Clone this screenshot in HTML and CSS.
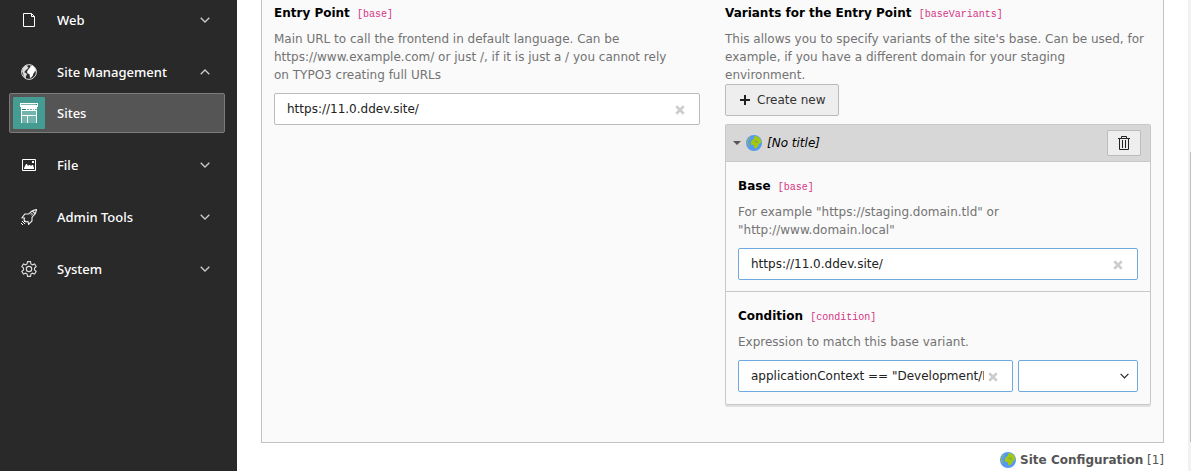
FILE: index.html
```html
<!DOCTYPE html>
<html lang="en">
<head>
<meta charset="utf-8">
<title>Site Configuration</title>
<link rel="stylesheet" href="styles.css">
</head>
<body>
<svg class="defs" aria-hidden="true">
  <symbol id="chevron" viewBox="0 0 10 6"><path d="M.7.7 5 5 9.300.7" fill="none" stroke="currentColor" stroke-width="1.300"/></symbol>
  <symbol id="clear" viewBox="0 0 8 8"><path d="M1 1l6 6M7 1L1 7" fill="none" stroke="currentColor" stroke-width="2"/></symbol>
  <symbol id="earth" viewBox="0 0 16 16">
    <circle cx="8" cy="8" r="8" fill="#5599f0"/>
    <path d="M7 4.500 8.500 3.300 7.500 2 9.500 1l3 1 2 2.300.7 3-1 1.200-1.400.3-.5 2.200-2 2L9 13.500 8 12.500V10H5.500L4.600 8.300 5.200 6z" fill="#a4c90c"/>
    <path d="M7.500 6l3.500-.4 1 1.400-1.300 1.300L9.500 7z" fill="#7fa84e"/>
    <path d="M1.200 5.500 3 2.700l1.500-1L4 3.500 2.500 5.200l-.6 1.900L2.700 9l.6 2.300-.4.700L1.700 10 1 8z" fill="#8aba5a"/>
  </symbol>
</svg>
<div class="app">
  <nav class="menu" aria-label="Modules">
    <button class="menu-item" type="button">
      <svg class="menu-icon" viewBox="0 0 16 16"><path d="M2.500 1.500h8l3 3v10h-11zM10.500 1.500v3h3" fill="none" stroke="#fff"/></svg>
      <span>Web</span><svg class="chevron"><use href="#chevron"/></svg>
    </button>
    <div class="menu-group">
      <button class="menu-item" type="button" aria-expanded="true">
        <svg class="menu-icon" viewBox="0 0 16 16"><circle cx="8" cy="8" r="7.400" fill="#292929" stroke="#ddd"/><path d="M2 4 4 2l3-1-1 1.500 1.500.5L6.500 5 4.800 6 4 7.500 2.800 8 5 9l1 1.500L5 12l-.3 2.500L2.500 12 2 9 1 7.500z" fill="#ddd"/><path d="M8 4.500 9.500 3 9 1.500l3 .5 2.300 2.500.9 3L14 7l-.7 1.500-1 1.200-.5 2-1.800 2H9l-.5-3.500-2-.7L6 7.500z" fill="#fff"/></svg>
        <span>Site Management</span><svg class="chevron up"><use href="#chevron"/></svg>
      </button>
      <a class="menu-item active" href="#sites">
        <svg class="module-icon" viewBox="0 0 32 32"><rect width="32" height="32" rx="1" fill="#449c93"/><path d="M7 6h18v4h-1v16H8V10H7z" fill="#fff"/><path d="M8 7h15v1H8z" fill="#7ab8b1"/><path d="M23 7h1v1h-1zM9 12h4v1H9z" fill="#28776e"/><path d="M14 12h2v1h-2zM17 12h2v1h-2zM20 12h1v1h-1zM22 12h2v1h-2zM9 14h14v4H9zM9 19h5v7H9zM15 19h8v7h-8z" fill="#72b4ad"/></svg>
        <span>Sites</span>
      </a>
    </div>
    <button class="menu-item" type="button">
      <svg class="menu-icon" viewBox="0 0 16 16"><path d="M1.500 2.500h13v11h-13z" fill="none" stroke="#fff"/><path d="M3 12v-1l2-4h1l1 2 1-1h1l1 1 1-1h1l1 3v1zM11 4h2v2h-2z" fill="#fff"/></svg>
      <span>File</span><svg class="chevron"><use href="#chevron"/></svg>
    </button>
    <button class="menu-item" type="button">
      <svg class="menu-icon" viewBox="0 0 16 16"><path d="M15.500.6c-3 .3-5.200 1.300-7 3.800L7.500 5H3.800L1 8.800l2.500.2-.5 2L5 13l2-.5.6 2.900L11 12V8.500l.8-1.100c2.400-1.900 3.500-3.900 3.700-6.800zM11.500 2l2.400 2.500" fill="none" stroke="#eee" stroke-width="1.100"/><circle cx="10.800" cy="5.300" r=".9" fill="none" stroke="#ddd" stroke-width=".7"/><path d="M1 12h1v1H1zM2 13h1v1H2zM0 14h1v1H0zM1 15h1v1H1zM3 12h1v1H3zM3 14h1v1H3z" fill="#fff"/></svg>
      <span>Admin Tools</span><svg class="chevron"><use href="#chevron"/></svg>
    </button>
    <button class="menu-item" type="button">
      <svg class="menu-icon" viewBox="0 0 16 16"><path d="M6.500.6h3l.4 2.300 1.600.9 2.100-.9 1.600 2.700L13.500 7v2l1.700 1.400-1.600 2.700-2.100-.9-1.600.9-.4 2.300h-3l-.4-2.300-1.600-.9-2.100.9L.8 10.400 2.500 9V7L.8 5.600l1.600-2.700 2.100.9 1.600-.9z" fill="none" stroke="#ddd" stroke-width="1.100"/><circle cx="8" cy="8" r="2.700" fill="none" stroke="#ddd" stroke-width="1.200"/></svg>
      <span>System</span><svg class="chevron"><use href="#chevron"/></svg>
    </button>
  </nav>

  <main class="content">
    <form class="panel">
      <section class="field">
        <label class="title" for="entry">Entry Point <code>[base]</code></label>
        <p>Main URL to call the frontend in default language. Can be https://www.example.com/ or just /, if it is just a / you cannot rely <br>on TYPO3 creating full URLs</p>
        <div class="input-box">
          <input id="entry" type="text" value="https://11.0.ddev.site/">
          <button type="button" class="clear" aria-label="Clear"><svg><use href="#clear"/></svg></button>
        </div>
      </section>
      <section class="field">
        <h2 class="title">Variants for the Entry Point <code>[baseVariants]</code></h2>
        <p class="tight">This allows you to specify variants of the site's base. Can be used, for example, if you have a different domain for your staging <br>environment.</p>
        <button class="btn" type="button"><svg viewBox="0 0 10 10"><path d="M5 0v10M0 5h10" stroke="#222" stroke-width="2"/></svg>Create new</button>
        <div class="record">
          <header class="record-head">
            <button class="toggle" type="button" aria-expanded="true">
              <svg class="caret" viewBox="0 0 8 4"><path d="M0 0h8L4 4z" fill="#555"/></svg>
              <svg class="earth"><use href="#earth"/></svg>
              <em>[No title]</em>
            </button>
            <button class="btn trash" type="button" aria-label="Delete"><svg viewBox="0 0 12 14"><path d="M0 2.500h12M3.500 2V.5h5V2M1.500 3v10.500h9V3M4.500 4v8M7.500 4v8" fill="none" stroke="#222"/></svg></button>
          </header>
          <section class="record-field">
            <label class="title" for="base">Base <code>[base]</code></label>
            <p>For example "https://staging.domain.tld" or "http://www.domain.local"</p>
            <div class="input-box changed">
              <input id="base" type="text" value="https://11.0.ddev.site/">
              <button type="button" class="clear" aria-label="Clear"><svg><use href="#clear"/></svg></button>
            </div>
          </section>
          <section class="record-field">
            <label class="title" for="condition">Condition <code>[condition]</code></label>
            <p>Expression to match this base variant.</p>
            <div class="combo">
              <div class="input-box changed">
                <input id="condition" type="text" value='applicationContext == "Development/Local"'>
                <button type="button" class="clear" aria-label="Clear"><svg><use href="#clear"/></svg></button>
              </div>
              <div class="select-box changed">
                <select aria-label="Condition presets"><option></option></select>
                <svg class="chevron"><use href="#chevron"/></svg>
              </div>
            </div>
          </section>
        </div>
      </section>
    </form>
    <footer class="foot"><svg class="earth"><use href="#earth"/></svg><span><strong>Site Configuration</strong> [1]</span></footer>
  </main>
  <div class="scroll" aria-hidden="true"><div class="thumb"></div></div>
</div>
</body>
</html>
```
FILE: styles.css
```css
* { box-sizing: border-box; }
body {
  margin: 0;
  font: 12px/18px Verdana, "DejaVu Sans", sans-serif;
  color: #222;
  background: #fff;
}
button, input, select { font: inherit; color: inherit; }
svg { display: block; flex: none; }
.defs { position: absolute; width: 0; height: 0; }
.app { display: flex; min-height: 100vh; }

.menu {
  flex: none;
  width: 237px;
  padding: 0 12px 0 9px;
  display: flex;
  flex-direction: column;
  gap: 12px;
  background: #292929;
}
.menu-group { display: grid; gap: 1px; }
.menu-item {
  display: flex;
  align-items: center;
  width: 100%;
  height: 40px;
  padding: 0 15px 0 12px;
  gap: 20px;
  border: 0;
  background: none;
  color: #fff;
  font: 500 13px/18px "Noto Sans", sans-serif;
  text-align: left;
  text-decoration: none;
}
.menu-item span { flex: 1; }
.menu-item.active {
  padding: 0 3px;
  gap: 12px;
  border: 1px solid #7c7c7c;
  border-radius: 2px;
  background: #555;
}
.menu-icon { width: 16px; height: 16px; }
.module-icon { width: 32px; height: 32px; }
.chevron { width: 10px; height: 6px; color: #ccc; }
.chevron.up { transform: rotate(180deg); }

.content { flex: 1; min-width: 0; padding: 0 24px; }
.panel {
  display: grid;
  grid-template-columns: 1fr 1fr;
  gap: 25px;
  padding: 4px 12px 37px;
  border: 1px solid #c3c3c3;
  border-top: 0;
  background: #fafafa;
}
.field { min-width: 0; }
.title { display: block; margin: 0; font-size: 12px; font-weight: 700; line-height: 18px; color: #000; }
.title code { margin-left: 3px; font: 10px/14px "Liberation Mono", monospace; color: #d63384; }
p { margin: 8px 0 9px; color: #737373; }
p.tight { margin-bottom: 0; }

.input-box, .select-box {
  display: flex;
  align-items: center;
  height: 32px;
  padding: 0 14px 0 12px;
  border: 1px solid #bbb;
  border-radius: 2px;
  background: #fff;
}
.changed { border-color: #6daae0; }
.input-box input { flex: 1; min-width: 0; padding: 0; border: 0; background: none; outline: 0; }
.clear { flex: none; padding: 2px 0 0 4px; border: 0; background: none; color: #ccc; }
.clear svg { width: 10px; height: 10px; }
.combo { display: flex; gap: 5px; }
.combo .input-box { flex: 1; min-width: 0; }
.select-box { width: 120px; padding: 0 8px 0 0; }
.select-box select { flex: 1; min-width: 0; height: 30px; border: 0; background: none; appearance: none; outline: 0; }
.select-box .chevron { width: 9px; color: #222; }

.btn {
  display: flex;
  align-items: center;
  justify-content: center;
  gap: 7px;
  height: 32px;
  padding: 0 12px 0 14px;
  border: 1px solid #bbb;
  border-radius: 2px;
  background: #eee;
  color: #333;
}
.btn svg { width: 10px; height: 10px; }
.btn.trash { width: 34px; height: 26px; padding: 0; }
.btn.trash svg { width: 12px; height: 14px; }

.record {
  margin-top: 8px;
  border: 1px solid #c8c8c8;
  border-radius: 2px;
  box-shadow: 0 2px 0 #e0e0e0;
}
.record-head {
  display: flex;
  align-items: center;
  justify-content: space-between;
  height: 36px;
  padding: 0 9px 0 7px;
  background: #d7d7d7;
}
.toggle { display: flex; align-items: center; gap: 5px; padding: 0; border: 0; background: none; color: #000; }
.caret { width: 8px; height: 4px; }
.earth { width: 16px; height: 16px; }
.record-field { padding: 15px 12px 11px; border-top: 1px solid #c8c8c8; }
.record-field:last-child { padding-bottom: 12px; }

.foot { display: flex; justify-content: flex-end; align-items: center; gap: 4px; padding: 8px 0 2px; color: #555; }

.scroll { flex: none; width: 3px; background: #f1f1f1; }
.thumb { width: 1px; height: 290px; margin: 152px 0 0 2px; background: #c1c1c1; }
```
